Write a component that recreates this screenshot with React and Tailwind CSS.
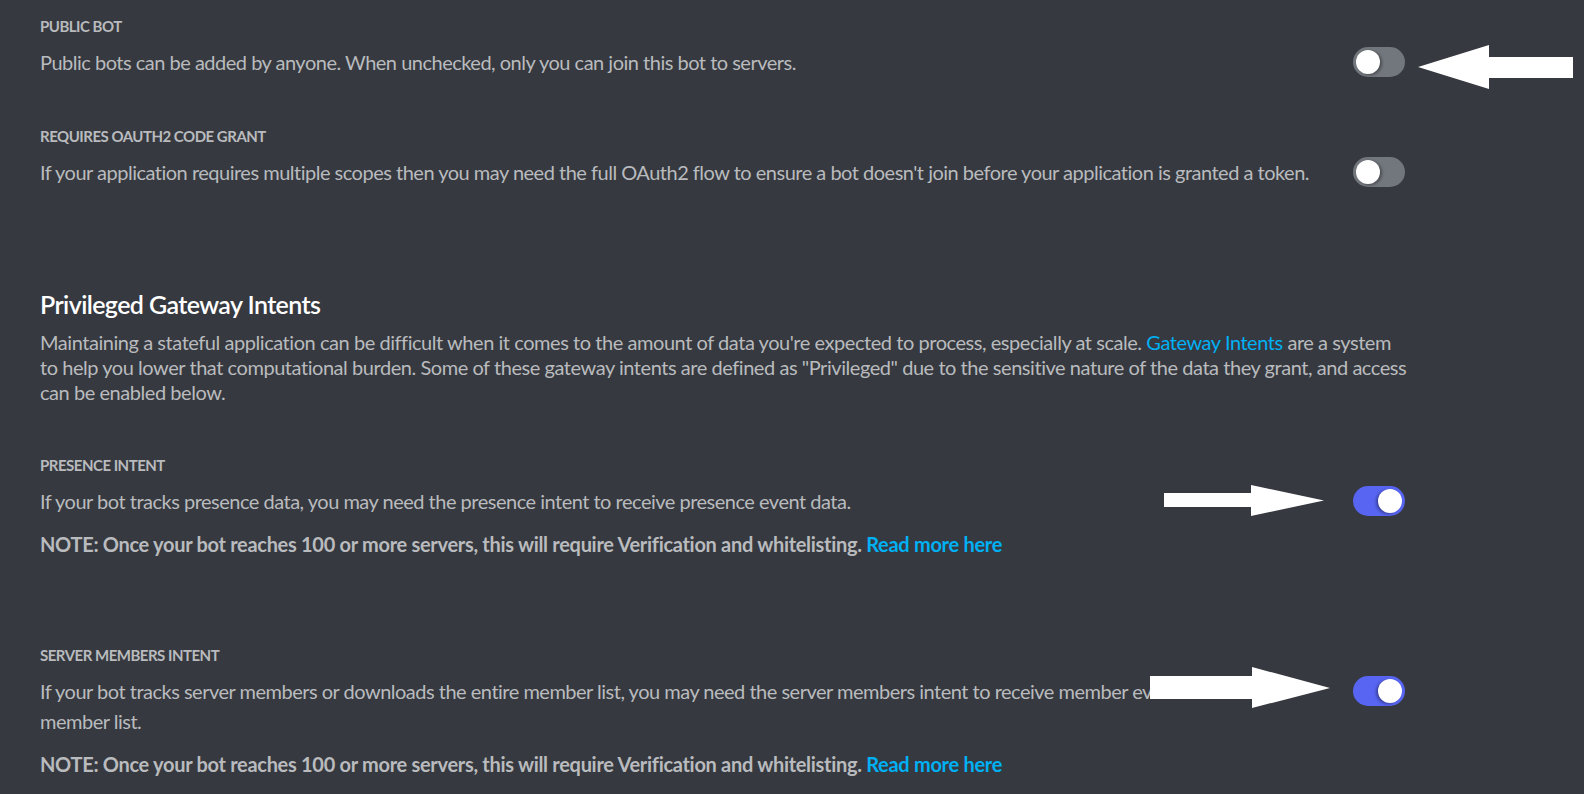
const Toggle = ({ on }) => (
  <div
    className={`relative shrink-0 w-[52px] h-[30px] rounded-full ${
      on ? "bg-[#5865f2]" : "bg-[#72767d]"
    }`}
  >
    <div
      className={`absolute top-[3px] w-[24px] h-[24px] rounded-full bg-white ${
        on ? "left-[25px] shadow-[-2px_1px_3px_rgba(0,0,0,0.35)]" : "left-[3px] shadow-[2px_1px_3px_rgba(0,0,0,0.35)]"
      }`}
    />
  </div>
);

const Label = ({ children }) => (
  <h5 className="text-[15px] leading-[20px] font-bold uppercase text-[#b9bbbe] tracking-[-0.5px]">
    {children}
  </h5>
);

const Note = () => (
  <p className="mt-4 text-[20px] leading-[25px] font-bold text-[#b9bbbe] tracking-[-0.3px]">
    NOTE: Once your bot reaches 100 or more servers, this will require Verification and whitelisting.{" "}
    <a className="text-[#00b0f4]">Read more here</a>
  </p>
);

const SettingRow = ({ label, text, on, note, className = "" }) => (
  <div className={className}>
    <Label>{label}</Label>
    <div className="mt-[11px] flex items-start gap-10">
      <p className="flex-1 text-[20px] leading-[30px] text-[#b9bbbe] tracking-[-0.5px]">{text}</p>
      <Toggle on={on} />
    </div>
    {note && <Note />}
  </div>
);

export default function App() {
  return (
    <div
      className="relative min-h-screen w-full bg-[#36393f] overflow-hidden"
      style={{ fontFamily: "Lato, 'Noto Sans', sans-serif" }}
    >
      <div className="w-[1405px] pl-10 pt-[16px]">
        <SettingRow
          label="Public Bot"
          text="Public bots can be added by anyone. When unchecked, only you can join this bot to servers."
          on={false}
        />
        <SettingRow
          className="mt-[49px]"
          label="Requires OAuth2 Code Grant"
          text="If your application requires multiple scopes then you may need the full OAuth2 flow to ensure a bot doesn't join before your application is granted a token."
          on={false}
        />

        <h2 className="mt-[102px] text-[25px] leading-[30px] font-semibold text-white tracking-[-0.6px]">
          Privileged Gateway Intents
        </h2>
        <p className="mt-[11px] w-[1368px] text-[20px] leading-[25px] text-[#b9bbbe] tracking-[-0.45px]">
          Maintaining a stateful application can be difficult when it comes to the amount of data you're expected to
          process, especially at scale. <a className="text-[#00b0f4]">Gateway Intents</a> are a system to help you lower
          that computational burden. Some of these gateway intents are defined as "Privileged" due to the sensitive
          nature of the data they grant, and access can be enabled below.
        </p>

        <SettingRow
          className="mt-[50px]"
          label="Presence Intent"
          text="If your bot tracks presence data, you may need the presence intent to receive presence event data."
          on
          note
        />
        <SettingRow
          className="mt-[88px]"
          label="Server Members Intent"
          text="If your bot tracks server members or downloads the entire member list, you may need the server members intent to receive member events and the member list."
          on
          note
        />
      </div>

      {/* annotation arrows */}
      <svg className="absolute left-0 top-0 pointer-events-none" width="1584" height="794">
        <polygon fill="#fff" points="1418,67 1489,45 1489,57 1573,57 1573,78 1489,78 1489,89" />
        <polygon fill="#fff" points="1164,493 1251,493 1251,485 1324,500.5 1251,516 1251,507 1164,507" />
        <polygon fill="#fff" points="1150,676 1252,676 1252,667 1330,688 1252,708 1252,699 1150,699" />
      </svg>
    </div>
  );
}
